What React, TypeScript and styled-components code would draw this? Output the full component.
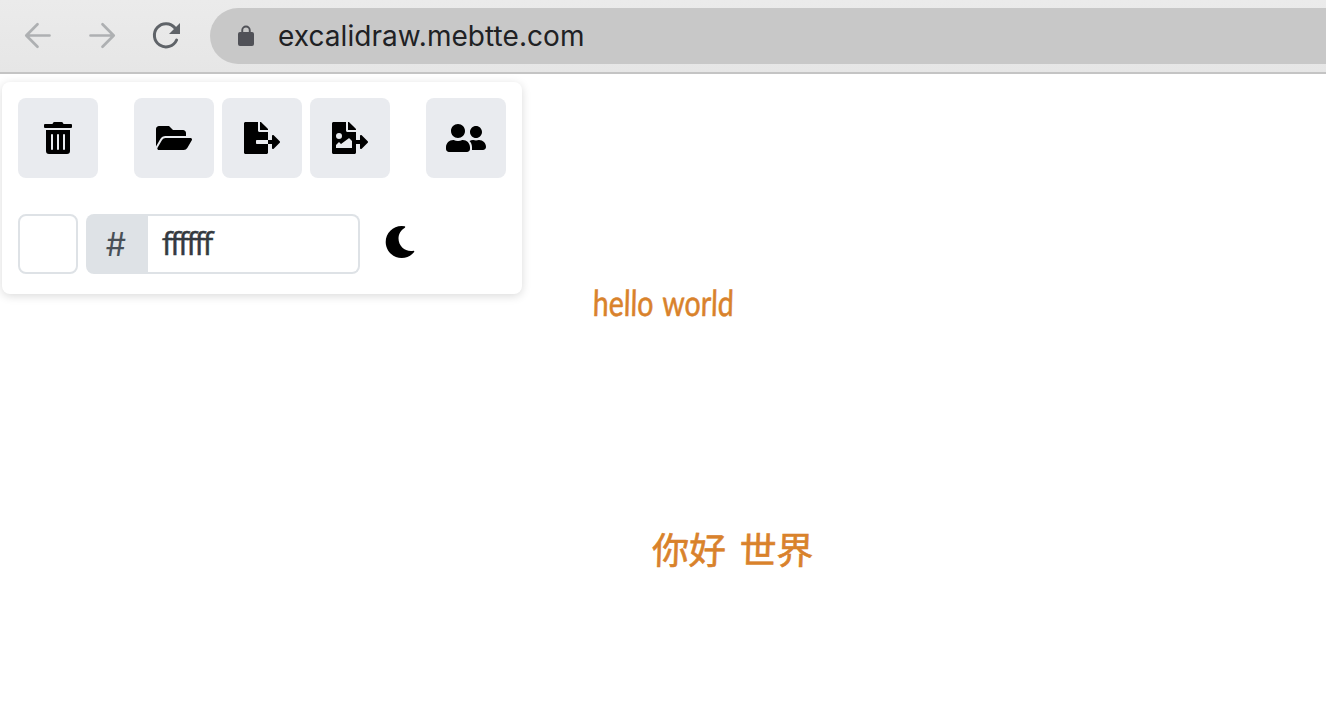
import React from 'react';
import styled, { createGlobalStyle } from 'styled-components';
import { FaTrashAlt, FaFolderOpen, FaFileExport, FaUserFriends, FaMoon } from 'react-icons/fa';

const GlobalStyle = createGlobalStyle`
  * { box-sizing: border-box; }
  body { margin: 0; background: #fff; overflow: hidden; }
`;

const Page = styled.div`
  display: flex;
  flex-direction: column;
  height: 100vh;
  font-family: Inter, 'Liberation Sans', sans-serif;
`;

const BrowserBar = styled.header`
  display: flex;
  flex: none;
  align-items: center;
  height: 74px;
  padding: 8px 0 8px 18px;
  background: linear-gradient(#ebebeb, #e6e6e6);
  border-bottom: 2px solid #c4c4c4;
`;

const NavIcon = styled.svg<{ $active?: boolean }>`
  flex: none;
  width: 40px;
  height: 40px;
  margin-right: 24px;
  fill: none;
  stroke: ${(p) => (p.$active ? '#5f6368' : '#aeb0b2')};
  stroke-width: ${(p) => (p.$active ? 3 : 2.7)};
  stroke-linecap: round;
  stroke-linejoin: round;
`;

const AddressBar = styled.div`
  display: flex;
  flex: 1;
  align-items: center;
  height: 56px;
  padding-left: 28px;
  background: #c8c8c8;
  border-radius: 28px 0 0 28px;
`;

const LockIcon = styled.svg`
  width: 16px;
  height: 22px;
  margin-right: 24px;
  fill: #505157;
`;

const Url = styled.span`
  font-size: 28px;
  line-height: 34px;
  letter-spacing: 0.06px;
  color: #202124;
`;

const Canvas = styled.main`
  position: relative;
  flex: 1;
  padding: 8px 2px;
`;

const Panel = styled.section`
  display: flex;
  flex-direction: column;
  gap: 36px;
  width: 520px;
  height: 212px;
  padding: 16px;
  background: #fff;
  border-radius: 8px;
  box-shadow: 0 2px 10px rgba(0, 0, 0, 0.15);
`;

const ButtonRow = styled.div`
  display: flex;
  gap: 36px;
`;

const ButtonGroup = styled.div`
  display: flex;
  gap: 8px;
`;

const ToolButton = styled.button<{ $iconWidth: number }>`
  display: flex;
  align-items: center;
  justify-content: center;
  width: 80px;
  height: 80px;
  padding: 0;
  border: 0;
  border-radius: 8px;
  background: #e9ebef;
  color: #000;
  svg { height: 32px; width: ${(p) => p.$iconWidth}px; flex: none; }
`;

const ColorRow = styled.div`
  display: flex;
  height: 60px;
`;

const Swatch = styled.button`
  width: 60px;
  height: 60px;
  margin: 0 8px 0 0;
  padding: 0;
  border: 2px solid #dee2e6;
  border-radius: 8px;
  background: #fff;
`;

const HexPrefix = styled.span`
  display: flex;
  align-items: center;
  justify-content: center;
  width: 62px;
  padding: 1px 2px 0 0;
  border-radius: 8px 0 0 8px;
  background: #dee2e6;
  color: #495057;
  font-size: 32px;
`;

const HexField = styled.div`
  width: 212px;
  padding-left: 14px;
  border: 2px solid #dee2e6;
  border-left: 0;
  border-radius: 0 8px 8px 0;
  color: #343a40;
  font: 400 31px/54px 'Open Sans', sans-serif;
  letter-spacing: -2.3px;
  font-variant-ligatures: none;
  -webkit-text-stroke: 0.5px #343a40;
`;

const ThemeButton = styled.button`
  width: 32px;
  height: 32px;
  margin: 12px 0 0 24px;
  padding: 0;
  border: 0;
  background: none;
  color: #000;
  svg { display: block; width: 32px; height: 32px; }
`;

const CanvasText = styled.span<{ $x: number; $y: number; $size: number; $scale: number; $gap?: number }>`
  position: absolute;
  left: ${(p) => p.$x}px;
  top: ${(p) => p.$y}px;
  transform: scaleX(${(p) => p.$scale}) skewX(-2deg);
  transform-origin: left center;
  white-space: nowrap;
  font-family: Lato, 'Noto Sans CJK SC', sans-serif;
  font-size: ${(p) => p.$size}px;
  line-height: 48px;
  word-spacing: ${(p) => p.$gap ?? 0}px;
  color: #d9822b;
  -webkit-text-stroke: 0.6px #d9822b;
`;

const ImageExportIcon = () => (
  <svg viewBox="0 0 576 512" fill="currentColor">
    <path d="M384 121.9c0-6.3-2.5-12.4-7-16.9L279.1 7c-4.5-4.5-10.6-7-17-7H256v128h128z" />
    <path d="M571 308l-95.7-96.4c-10.1-10.1-27.4-3-27.4 11.3V288h-64v64h64v65.2c0 14.3 17.3 21.4 27.4 11.3L571 332c6.6-6.6 6.6-17.4 0-24z" />
    <path
      fillRule="evenodd"
      d="M24 0C10.7 0 0 10.7 0 24v464c0 13.3 10.7 24 24 24h336c13.3 0 24-10.7 24-24V160H248c-13.2 0-24-10.8-24-24V0zM112 176a48 48 0 1 1 0 96 48 48 0 0 1 0-96zM64 416v-48l39.5-39.5c4.7-4.7 11.8-4.2 16.5 .5L144 352l119.5-87.500c4.700-4.700 12.300-4.700 17 0L320 304v112z"
    />
  </svg>
);

export default function App() {
  return (
    <Page>
      <GlobalStyle />
      <BrowserBar>
        <NavIcon viewBox="0 0 40 40">
          <path d="M31.5 19.5H8.5M19.5 8.3L8.300 19.500l11.200 11.200" />
        </NavIcon>
        <NavIcon viewBox="0 0 40 40">
          <path d="M8.5 19.5h23M20.5 8.300l11.200 11.200-11.200 11.200" />
        </NavIcon>
        <NavIcon $active viewBox="0 0 40 40">
          <path d="M29 12A11.6 11.600 0 1 0 30.600 24" />
          <path d="M34 7v11H23z" fill="#5f6368" stroke="none" />
        </NavIcon>
        <AddressBar>
          <LockIcon viewBox="0 0 16 22">
            <path d="M2 7h1.3V5.3a4.7 4.7 0 0 1 9.4 0V7H14a2 2 0 0 1 2 2v10a2 2 0 0 1-2 2H2a2 2 0 0 1-2-2V9a2 2 0 0 1 2-2zm3.2 0h5.6V5.3a2.8 2.8 0 0 0-5.6 0z" />
          </LockIcon>
          <Url>excalidraw.mebtte.com</Url>
        </AddressBar>
      </BrowserBar>
      <Canvas>
        <Panel>
          <ButtonRow>
            <ToolButton $iconWidth={28} aria-label="Reset the canvas"><FaTrashAlt /></ToolButton>
            <ButtonGroup>
              <ToolButton $iconWidth={36} aria-label="Load"><FaFolderOpen /></ToolButton>
              <ToolButton $iconWidth={36} aria-label="Save as"><FaFileExport /></ToolButton>
              <ToolButton $iconWidth={36} aria-label="Save as image"><ImageExportIcon /></ToolButton>
            </ButtonGroup>
            <ToolButton $iconWidth={40} aria-label="Live collaboration"><FaUserFriends /></ToolButton>
          </ButtonRow>
          <ColorRow>
            <Swatch aria-label="Canvas background" />
            <HexPrefix>#</HexPrefix>
            <HexField>ffffff</HexField>
            <ThemeButton aria-label="Dark mode"><FaMoon /></ThemeButton>
          </ColorRow>
        </Panel>
        <CanvasText $x={593} $y={204} $size={36} $scale={0.79} $gap={3}>hello world</CanvasText>
        <CanvasText $x={652} $y={452} $size={37} $scale={1} $gap={4}>你好 世界</CanvasText>
      </Canvas>
    </Page>
  );
}
